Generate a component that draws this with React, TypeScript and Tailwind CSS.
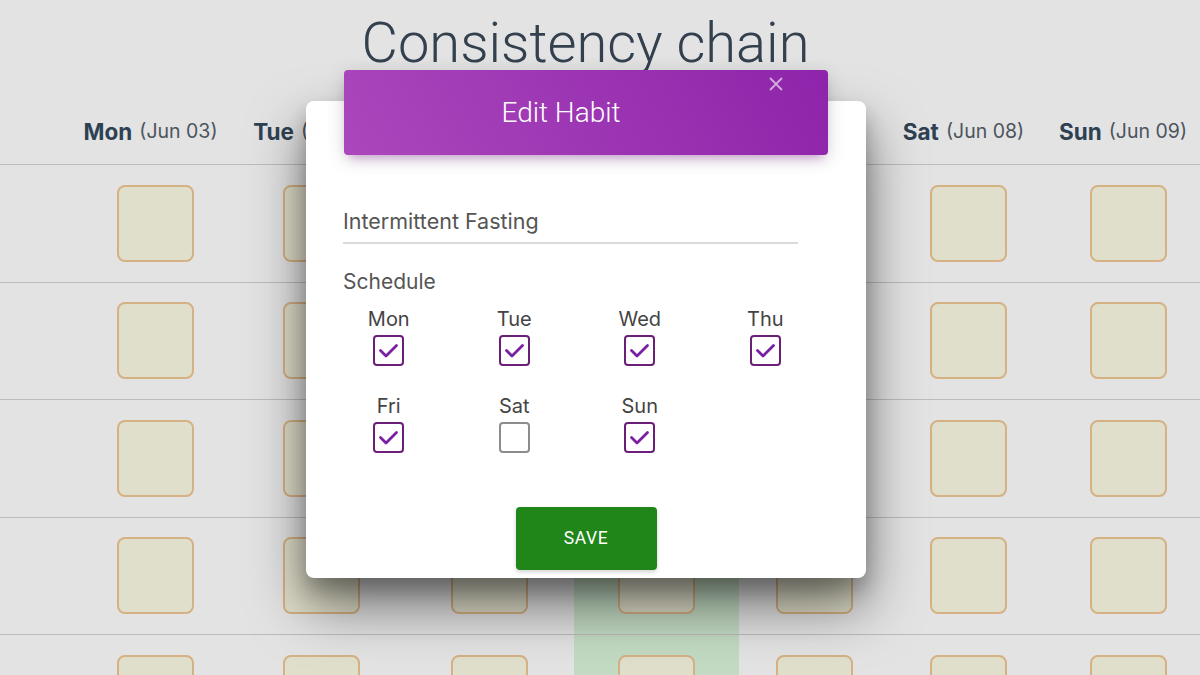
import React from "react";

const days = [
    { day: "Mon", date: "Jun 03", width: "w-[165px]" },
    { day: "Tue", date: "Jun 04", width: "w-[167px]" },
    { day: "Wed", date: "Jun 05", width: "w-[169px]" },
    { day: "Thu", date: "Jun 06", width: "w-[165px]", today: true },
    { day: "Fri", date: "Jun 07", width: "w-[151px]" },
    { day: "Sat", date: "Jun 08", width: "w-[157px]" },
    { day: "Sun", date: "Jun 09", width: "w-[162px]" },
];

const schedule = [
    { label: "Mon", checked: true },
    { label: "Tue", checked: true },
    { label: "Wed", checked: true },
    { label: "Thu", checked: true },
    { label: "Fri", checked: true },
    { label: "Sat", checked: false },
    { label: "Sun", checked: true },
];

function Checkbox({ checked }: { checked: boolean }) {
    return (
        <div
            className={
                checked
                    ? "mt-[4px] w-[31px] h-[31px] rounded-[4px] border-2 border-[#6b1f78] flex items-center justify-center"
                    : "mt-[4px] w-[31px] h-[31px] rounded-[4px] border-2 border-[#8c8c8c]"
            }
        >
            {checked && (
                <svg width="27" height="27" viewBox="0 0 27 27" fill="none">
                    <polyline
                        points="5.5,13.5 11,19 21.5,8.5"
                        stroke="#7b1fa2"
                        strokeWidth="2.8"
                        strokeLinecap="round"
                        strokeLinejoin="round"
                    />
                </svg>
            )}
        </div>
    );
}

function ChainTable() {
    return (
        <div>
            <div className="flex h-[65px] border-b border-[#d2d2d2]">
                <div className="w-[73px] shrink-0" />
                {days.map((d) => (
                    <div key={d.day} className={`${d.width} shrink-0 flex items-center justify-center pr-[10px] whitespace-nowrap`}>
                        <span className="text-[22.5px] font-bold text-[#34495e]">{d.day}</span>
                        <span className="ml-[7px] text-[19.5px] text-[#56606b]">({d.date})</span>
                    </div>
                ))}
            </div>
            {[0, 1, 2, 3, 4].map((row) => (
                <div key={row} className="flex h-[117.5px] border-b border-[#d2d2d2]">
                    <div className="w-[73px] shrink-0" />
                    {days.map((d) => (
                        <div
                            key={d.day}
                            className={`${d.width} shrink-0 flex items-center justify-center ${d.today ? "bg-[#dbf6db]" : ""}`}
                        >
                            <div className="w-[77px] h-[77px] rounded-[8px] border-2 border-[#f0c795] bg-[#fcfbe4]" />
                        </div>
                    ))}
                </div>
            ))}
        </div>
    );
}

function EditHabitModal() {
    return (
        <div className="absolute left-[306px] top-[101px] w-[560px] bg-white rounded-[8px] pb-[8px] shadow-[0_28px_55px_rgba(0,0,0,0.5),0_12px_20px_rgba(0,0,0,0.22)] font-['Inter',sans-serif]">
            <div className="relative -mt-[31px] mx-[38px] h-[85px] rounded-[4px] bg-[linear-gradient(60deg,#ab47bc,#8e24aa)] flex items-center justify-center pr-[50px] shadow-[0_4px_20px_rgba(0,0,0,0.14),0_7px_10px_-5px_rgba(156,39,176,0.4)]">
                <h2 className="font-['Roboto',sans-serif] font-light text-[28px] text-white">Edit Habit</h2>
                <button className="absolute right-[44px] top-[6px] w-[16px] h-[16px] flex items-center justify-center">
                    <svg width="14" height="14" viewBox="0 0 14 14">
                        <path d="M1 1L13 13M13 1L1 13" stroke="rgba(255,255,255,0.6)" strokeWidth="1.8" />
                    </svg>
                </button>
            </div>

            <div className="px-[37px]">
                <div className="mt-[46px] w-[455px] h-[43px] border-b-2 border-[#dadada] flex items-center text-[21.5px] text-[#555]">
                    Intermittent Fasting
                </div>

                <div className="mt-[26px] text-[21px] leading-[24px] text-[#555]">Schedule</div>

                <div className="-ml-[17px] mt-[13px] w-[502px] grid grid-cols-4 gap-y-[28px]">
                    {schedule.map((s) => (
                        <div key={s.label} className="flex flex-col items-center">
                            <span className="text-[20px] leading-[24px] text-[#444]">{s.label}</span>
                            <Checkbox checked={s.checked} />
                        </div>
                    ))}
                </div>

                <div className="mt-[54px] flex justify-center">
                    <button className="w-[141px] h-[63px] rounded-[4px] bg-[#21861a] text-white text-[17.5px] tracking-[0.03em] font-['Roboto',sans-serif] shadow-[0_2px_4px_rgba(0,0,0,0.18)]">
                        SAVE
                    </button>
                </div>
            </div>
        </div>
    );
}

export default function App() {
    return (
        <div className="relative w-[1200px] h-[675px] overflow-hidden bg-white font-['Inter',sans-serif]">
            <div className="h-[100px] flex justify-center pr-[29px]">
                <h1 className="mt-[9px] font-['Roboto',sans-serif] font-light text-[56px] leading-[68px] text-[#3a4858]">
                    Consistency chain
                </h1>
            </div>
            <ChainTable />

            <div className="absolute inset-0 bg-black/[0.11]" />
            <EditHabitModal />
        </div>
    );
}
